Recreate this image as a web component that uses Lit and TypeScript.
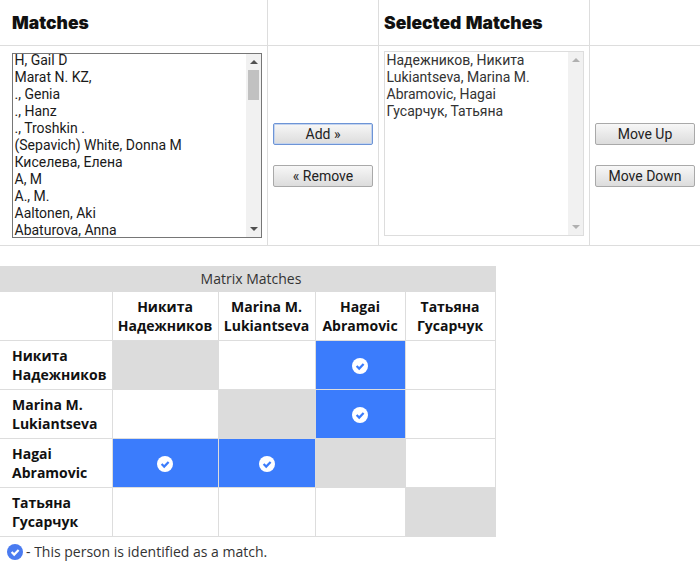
import { LitElement, html, css, svg } from "lit";
import { customElement } from "lit/decorators.js";

const left = ["H, Gail D","Marat N. KZ,","., Genia","., Hanz","., Troshkin .","(Sepavich) White, Donna M","Киселева, Елена","A, M","A., M.","Aaltonen, Aki","Abaturova, Anna"];
const right = ["Надежников, Никита","Lukiantseva, Marina M.","Abramovic, Hagai","Гусарчук, Татьяна"];
const people = [["Никита","Надежников"],["Marina M.","Lukiantseva"],["Hagai","Abramovic"],["Татьяна","Гусарчук"]];
const matches = [[0,2],[1,2],[2,0],[2,1]];

const check = (size: number, bg: string, fg: string) => html`<svg width=${size} height=${size} viewBox="0 0 16 16">${svg`<circle cx="8" cy="8" r="8" fill=${bg}/><path d="M4.6 8 L7.2 10.6 L11.6 5.9" fill="none" stroke=${fg} stroke-width="2.2"/>`}</svg>`;

@customElement("app-root")
export class AppRoot extends LitElement {
  static styles = css`
    :host { display: block; width: 700px; height: 578px; background: #fff; font-family: "Open Sans", sans-serif; color: #222; overflow: hidden; }
    .top { display: grid; grid-template-columns: 268px 111px 211px 110px; grid-template-rows: 46px 199px; border-bottom: 1px solid #ddd; }
    .top > div { border-right: 1px solid #ddd; box-sizing: border-box; }
    .top > div:nth-child(4n) { border-right: none; }
    .head { border-bottom: 1px solid #ddd; display: flex; align-items: center; font-family: Inter, sans-serif; font-weight: 900; font-size: 17.5px; word-spacing: 1px; color: #111; padding-left: 12px; }
    .head.sel { padding-left: 5px; }
    .cell { padding-left: 12px; padding-top: 7px; }
    .cell.r { padding-left: 5px; padding-top: 5px; }
    .box { display: flex; box-sizing: border-box; overflow: hidden; font-family: Roboto, sans-serif; font-size: 14px; line-height: 17px; color: #1a1a1a; }
    .box.a { width: 250px; height: 185px; border: 1px solid #767676; }
    .box.b { width: 200px; height: 185px; border: 1px solid #ddd; color: #333; }
    .items { flex: 1; padding-left: 1.5px; margin-top: -2px; }
    .box.b .items { margin-top: 0; }
    .bar { width: 15px; background: #f1f1f1; display: flex; flex-direction: column; align-items: center; }
    .thumb { width: 11px; height: 30px; background: #c1c1c1; }
    .up, .dn { width: 0; height: 0; border-left: 4px solid transparent; border-right: 4px solid transparent; }
    .up { border-bottom: 4px solid #505050; margin: 6px 0 6px; }
    .dn { border-top: 4px solid #505050; margin-top: auto; margin-bottom: 6px; }
    .box.b .up { border-bottom-color: #b0b0b0; margin-bottom: 0; }
    .box.b .dn { border-top-color: #b0b0b0; }
    .btns { display: flex; flex-direction: column; align-items: center; gap: 20px; padding-top: 77px; }
    button { width: 100px; height: 22px; padding: 0; box-sizing: border-box; border: 1px solid #a9a9a9; border-radius: 2px; background: linear-gradient(#f7f7f7, #dcdcdc); font-family: Roboto, sans-serif; font-size: 14px; color: #222; }
    button.focus { border-color: #6d94d6; box-shadow: 0 0 0 1px #c3d3ee inset; }
    .matrix { display: grid; width: 496px; margin-top: 20px; grid-template-columns: 113px 106px 97px 90px 90px; grid-template-rows: 26px repeat(5, 49px); font-size: 14px; }
    .title { grid-column: 1 / -1; background: #dcdcdc; display: flex; align-items: center; justify-content: center; padding: 0 0 2px 6px; box-sizing: border-box; font-size: 14px; color: #333; }
    .c { box-sizing: border-box; border-right: 1px solid #ddd; border-bottom: 1px solid #ddd; display: flex; align-items: center; justify-content: center; }
    .th { flex-direction: column; font-weight: 700; color: #111; line-height: 19px; text-align: center; padding-right: 1px; }
    .rh { flex-direction: column; align-items: flex-start; padding-left: 12px; font-weight: 700; color: #111; line-height: 19px; }
    .c.diag { background: #dcdcdc; border-color: #dcdcdc; }
    .c.m { background: #3b7cfc; padding: 2px 1px 0 0; }
    .legend { display: flex; align-items: center; gap: 3px; padding: 5px 0 0 7px; font-size: 14px; color: #333; }
    .legend svg { margin-top: 1px; }
  `;

  render() {
    const isMatch = (r: number, c: number) => matches.some(([a, b]) => a === r && b === c);
    return html`
      <div class="top">
        <div class="head">Matches</div><div class="head"></div><div class="head sel">Selected Matches</div><div class="head"></div>
        <div class="cell">
          <div class="box a">
            <div class="items">${left.map((t) => html`<div>${t}</div>`)}</div>
            <div class="bar"><div class="up"></div><div class="thumb"></div><div class="dn"></div></div>
          </div>
        </div>
        <div class="btns"><button class="focus">Add »</button><button>« Remove</button></div>
        <div class="cell r">
          <div class="box b">
            <div class="items">${right.map((t) => html`<div>${t}</div>`)}</div>
            <div class="bar"><div class="up"></div><div class="dn"></div></div>
          </div>
        </div>
        <div class="btns"><button>Move Up</button><button>Move Down</button></div>
      </div>
      <div class="matrix">
        <div class="title">Matrix Matches</div>
        <div class="c"></div>
        ${people.map((p) => html`<div class="c th"><span>${p[0]}</span><span>${p[1]}</span></div>`)}
        ${people.map((p, r) => html`
          <div class="c rh"><span>${p[0]}</span><span>${p[1]}</span></div>
          ${people.map((_, c) => r === c
            ? html`<div class="c diag"></div>`
            : isMatch(r, c)
              ? html`<div class="c m">${check(16, "#fff", "#3b7cfc")}</div>`
              : html`<div class="c"></div>`)}
        `)}
      </div>
      <div class="legend">${check(16, "#4a7bf0", "#fff")}<span>- This person is identified as a match.</span></div>
    `;
  }
}
